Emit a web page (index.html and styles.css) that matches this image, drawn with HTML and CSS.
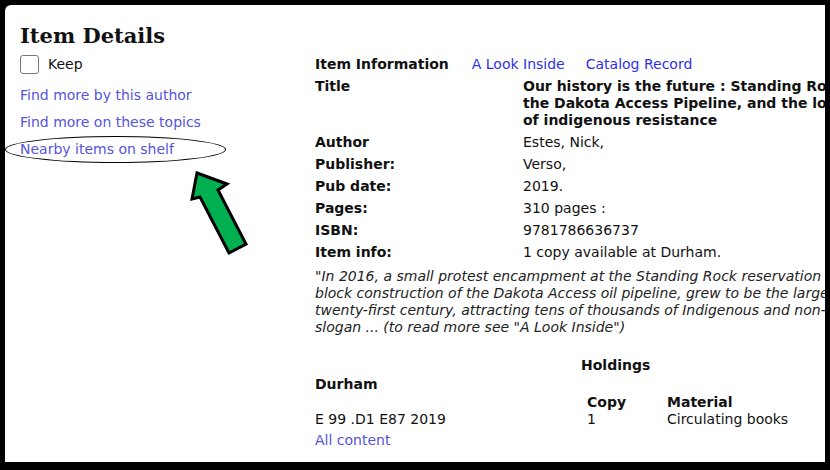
FILE: index.html
```html
<!DOCTYPE html>
<html>
<head>
  <title>Item Details</title>
  <meta charset="UTF-8">
  <link rel="stylesheet" href="styles.css">
</head>
<body>
  <div class="frame">
    <div class="page">
      <div class="sidebar">
        <div class="heading">Item Details</div>
        <label class="keep"><span class="box"></span>Keep</label>
        <a class="side-link" href="#">Find more by this author</a>
        <a class="side-link" href="#">Find more on these topics</a>
        <a class="side-link shelf" href="#">Nearby items on shelf</a>
      </div>
      <div class="main">
        <div class="tabs">
          <span class="tab-title">Item Information</span>
          <a class="tab" href="#">A Look Inside</a>
          <a class="tab" href="#">Catalog Record</a>
        </div>
        <div class="info">
          <div class="label">Title</div>
          <div class="value title">Our history is the future : Standing Rock versus<br>the Dakota Access Pipeline, and the long tradition<br>of indigenous resistance</div>
          <div class="label">Author</div>
          <div class="value">Estes, Nick,</div>
          <div class="label">Publisher:</div>
          <div class="value">Verso,</div>
          <div class="label">Pub date:</div>
          <div class="value">2019.</div>
          <div class="label">Pages:</div>
          <div class="value">310 pages :</div>
          <div class="label">ISBN:</div>
          <div class="value">9781786636737</div>
          <div class="label">Item info:</div>
          <div class="value">1 copy available at Durham.</div>
        </div>
        <p class="summary">"In 2016, a small protest encampment at the Standing Rock reservation in North Dakota, established to<br>block construction of the Dakota Access oil pipeline, grew to be the largest Indigenous protest movement of the<br>twenty-first century, attracting tens of thousands of Indigenous and non-Indigenous allies under the<br>slogan ... (to read more see "A Look Inside")</p>
        <div class="holdings">
          <div class="holdings-title">Holdings</div>
          <div class="location">Durham</div>
          <div class="copies">
            <div class="col call"><div>&nbsp;</div><div>E 99 .D1 E87 2019</div></div>
            <div class="col copy"><div class="th">Copy</div><div>1</div></div>
            <div class="col material"><div class="th">Material</div><div>Circulating books</div></div>
          </div>
          <a class="side-link all" href="#">All content</a>
        </div>
      </div>
    </div>
    <svg class="arrow" width="90" height="100" viewBox="0 0 90 100">
      <polygon points="27,13 57,24 48,30 76,84 59,93 30,37 22,39" fill="#00b050" stroke="#000" stroke-width="3" stroke-linejoin="miter"/>
    </svg>
  </div>
</body>
</html>
```

FILE: styles.css
```css
body {
  margin: 0;
  background: #000;
}

.frame {
  position: relative;
  margin: 5px 5px 0 5px;
  height: 457px;
  background: #fff;
  border-top-left-radius: 6px;
  overflow: hidden;
  font-family: "DejaVu Sans", Verdana, sans-serif;
  font-size: 14px;
  color: #111;
}

.page {
  display: flex;
  padding: 0 0 0 15px;
  width: 1200px;
}

.sidebar {
  width: 295px;
  flex-shrink: 0;
  display: flex;
  flex-direction: column;
  align-items: flex-start;
}

.heading {
  font-family: "DejaVu Serif", Georgia, serif;
  font-weight: bold;
  font-size: 21px;
  margin-top: 18px;
  line-height: 26px;
}

.keep {
  display: flex;
  align-items: center;
  margin-top: 4px;
  margin-bottom: 3px;
  height: 22px;
}

.box {
  width: 17px;
  height: 17px;
  border: 1.5px solid #777;
  border-radius: 3px;
  margin-right: 9px;
}

.side-link {
  color: #5555dd;
  text-decoration: none;
  margin-top: 8px;
  line-height: 19px;
}

.shelf {
  position: relative;
}

.shelf::after {
  content: "";
  position: absolute;
  left: -15px;
  top: -4px;
  width: 219px;
  height: 25px;
  border: 1px solid #000;
  border-radius: 50%;
}

.main {
  width: 860px;
  padding-top: 48px;
}

.tabs {
  display: flex;
  line-height: 22px;
  margin-bottom: 3px;
}

.tab-title {
  font-weight: bold;
  margin-right: 23px;
}

.tab {
  color: #3030e8;
  text-decoration: none;
  margin-right: 21px;
}

.info {
  display: grid;
  grid-template-columns: 208px 1fr;
  row-gap: 5px;
  width: 610px;
}

.label {
  font-weight: bold;
  line-height: 17px;
}

.value {
  line-height: 17px;
}

.value.title {
  font-weight: bold;
  white-space: nowrap;
}

.summary {
  font-style: italic;
  color: #222;
  margin: 7px 0 0 0;
  line-height: 17px;
  white-space: nowrap;
}

.holdings {
  margin-top: 19px;
}

.holdings-title {
  font-weight: bold;
  margin-left: 266px;
  line-height: 20px;
}

.location {
  font-weight: bold;
  line-height: 18px;
  margin-bottom: 1px;
}

.copies {
  display: flex;
  line-height: 17px;
}

.col.call {
  width: 272px;
}

.col.copy {
  width: 80px;
}

.th {
  font-weight: bold;
}

.side-link.all {
  display: block;
  margin-top: 3px;
}

.arrow {
  position: absolute;
  left: 165px;
  top: 155px;
}
```
